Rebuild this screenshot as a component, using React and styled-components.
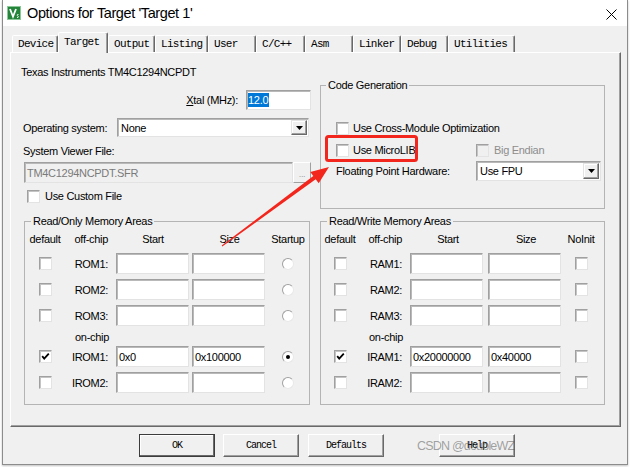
import React from "react";
import styled, { createGlobalStyle } from "styled-components";

const GlobalStyle = createGlobalStyle`
	* { box-sizing: border-box; }
	html, body { margin: 0; padding: 0; background: #fff; }
	body {
		width: 630px;
		height: 467px;
		overflow: hidden;
		font-family: "Liberation Sans", Arial, sans-serif;
		font-size: 11px;
		letter-spacing: -0.3px;
		color: #000;
	}
`;

const Stage = styled.div`
	position: relative;
	width: 630px;
	height: 467px;
	padding-left: 2px;
`;

const Window = styled.div`
	width: 626px;
	height: 465px;
	display: flex;
	flex-direction: column;
	background: #f0f0f0;
	border: 1px solid #8c8c8c;
	border-top: none;
	box-shadow: 0 1px 2px rgba(0, 0, 0, 0.25);
`;

const TitleBar = styled.div`
	height: 26px;
	display: flex;
	align-items: center;
	background: #fff;
	padding-left: 4px;
`;

const Title = styled.span`
	margin-left: 6px;
	font-size: 14.5px;
	letter-spacing: -0.4px;
	color: #000;
`;

const Close = styled.span`
	margin-left: auto;
	margin-right: 10px;
	display: flex;
	margin-top: 2px;
`;

const Body = styled.div`
	flex: 1;
	padding: 6px 0 0 7px;
	display: flex;
	flex-direction: column;
`;

const TabRow = styled.div`
	display: flex;
	align-items: flex-end;
	height: 20px;
	margin-left: 2px;
`;

const Tab = styled.div`
	position: relative;
	z-index: ${({ $active }) => ($active ? 2 : 1)};
	width: ${({ $w }) => $w}px;
	height: ${({ $active }) => ($active ? 21 : 17)}px;
	margin-bottom: ${({ $active }) => ($active ? -1 : 0)}px;
	padding: 0 0 ${({ $active }) => ($active ? 3 : 0)}px 5px;
	display: flex;
	align-items: center;
	background: #f0f0f0;
	border: 1px solid;
	border-bottom: none;
	border-color: #fff #696969 transparent #fff;
	border-radius: 2px 2px 0 0;
	box-shadow: inset -1px 0 0 #a0a0a0;
	font-family: "Liberation Mono", "Courier New", monospace;
	font-size: 11px;
	letter-spacing: -0.7px;
	white-space: nowrap;
`;

const Panel = styled.div`
	width: 611px;
	height: 375px;
	display: grid;
	grid-template-columns: 290px 285px;
	column-gap: 9px;
	align-items: start;
	padding: 12px 0 0 10px;
	border: 1px solid;
	border-color: #fff #696969 #696969 #fff;
	box-shadow: inset -1px -1px 0 #a0a0a0;
`;

const Column = styled.div`
	display: flex;
	flex-direction: column;
`;

const Line = styled.div`
	height: ${({ $h }) => $h || 14}px;
	margin-top: ${({ $mt }) => $mt || 0}px;
	padding-left: ${({ $pl }) => $pl || 0}px;
	display: flex;
	align-items: center;
	justify-content: ${({ $end }) => ($end ? "flex-end" : "flex-start")};
	gap: ${({ $gap }) => $gap || 0}px;
	color: ${({ $dim }) => ($dim ? "#8d8d8d" : "inherit")};
	white-space: nowrap;
`;

const Field = styled.div`
	position: relative;
	flex: ${({ $w }) => ($w ? "none" : "1")};
	width: ${({ $w }) => ($w ? `${$w}px` : "auto")};
	height: ${({ $h }) => $h || 21}px;
	display: flex;
	align-items: center;
	padding-left: ${({ $pl }) => $pl ?? 2}px;
	background: ${({ $disabled }) => ($disabled ? "#f0f0f0" : "#fff")};
	color: ${({ $disabled }) => ($disabled ? "#7a7a7a" : "#000")};
	border: 1px solid;
	border-color: #a0a0a0 #e3e3e3 #e3e3e3 #a0a0a0;
	box-shadow: inset 1px 1px 0 #b9b9b9;
	white-space: nowrap;
	overflow: hidden;
`;

const Selected = styled.span`
	background: #0078d7;
	color: #fff;
	line-height: 14px;
	padding-right: 1px;
`;

const DropButton = styled.span`
	position: absolute;
	top: 1px;
	right: 1px;
	bottom: 1px;
	width: 16px;
	display: flex;
	align-items: center;
	justify-content: center;
	background: #f0f0f0;
	border: 1px solid;
	border-color: #e3e3e3 #696969 #696969 #e3e3e3;
	box-shadow: inset -1px -1px 0 #a0a0a0, inset 1px 1px 0 #fff;
`;

const BrowseButton = styled.div`
	width: 18px;
	height: 21px;
	display: flex;
	align-items: flex-end;
	justify-content: center;
	padding-bottom: 3px;
	color: #a0a0a0;
	font-size: 9px;
	background: #f0f0f0;
	border: 1px solid;
	border-color: #fff #a0a0a0 #a0a0a0 #fff;
`;

const Box = styled.span`
	flex: none;
	width: 13px;
	height: 13px;
	display: inline-flex;
	align-items: center;
	justify-content: center;
	background: ${({ $disabled }) => ($disabled ? "#f0f0f0" : "#fff")};
	border: 1px solid;
	border-color: #a0a0a0 #e3e3e3 #e3e3e3 #a0a0a0;
	box-shadow: inset 1px 1px 0 #c4c4c4;
`;

const Radio = styled.span`
	width: 12px;
	height: 12px;
	display: inline-flex;
	align-items: center;
	justify-content: center;
	border-radius: 50%;
	background: #fff;
	border: 1px solid;
	border-color: #a0a0a0 #e8e8e8 #e8e8e8 #a0a0a0;

	&::after {
		content: "";
		width: 4px;
		height: 4px;
		border-radius: 50%;
		background: ${({ $on }) => ($on ? "#000" : "transparent")};
	}
`;

const Group = styled.fieldset`
	margin: ${({ $mt }) => $mt || 0}px 0 0 ${({ $ml }) => $ml || 0}px;
	width: ${({ $w }) => $w}px;
	min-width: 0;
	padding: 0 4px ${({ $pb }) => $pb}px ${({ $pl }) => $pl || 0}px;
	border: 1px solid #b4b4b4;
`;

const Legend = styled.legend`
	margin-left: ${({ $ml }) => $ml ?? 6}px;
	padding: 0 2px;
	line-height: 14px;
	font-size: 11px;
`;

const MemRow = styled.div`
	display: grid;
	grid-template-columns: ${({ $cols }) => $cols};
	height: ${({ $h }) => $h}px;
	margin-top: ${({ $mt }) => $mt}px;
	align-items: center;
`;

const Cell = styled.div`
	display: flex;
	align-items: center;
	justify-content: ${({ $align }) =>
		$align === "end" ? "flex-end" : $align === "start" ? "flex-start" : "center"};
	padding-left: ${({ $pl }) => $pl || 0}px;
	padding-right: ${({ $pr }) => $pr || 0}px;
	height: 100%;
	white-space: nowrap;
`;

const OptionGrid = styled.div`
	display: grid;
	grid-template-columns: 140px 1fr;
	align-items: center;
	height: ${({ $h }) => $h}px;
	margin-top: ${({ $mt }) => $mt}px;
`;

const ButtonRow = styled.div`
	display: flex;
	margin-top: 7px;
	padding-left: 129px;
`;

const Button = styled.div`
	width: 76px;
	height: 23px;
	margin-left: ${({ $ml }) => $ml || 0}px;
	display: flex;
	align-items: center;
	justify-content: center;
	background: #f0f0f0;
	border: 1px solid;
	border-color: ${({ $default }) =>
		$default ? "#3c3c3c" : "#fff #696969 #696969 #fff"};
	box-shadow: ${({ $default }) =>
		$default
			? "inset -1px -1px 0 #696969, inset 1px 1px 0 #fff"
			: "inset -1px -1px 0 #a0a0a0"};
	font-family: "Liberation Mono", "Courier New", monospace;
	font-size: 10px;
	letter-spacing: -1px;
`;

const Overlay = styled.svg`
	position: absolute;
	left: 0;
	top: 0;
	pointer-events: none;
`;

const Watermark = styled.span`
	position: absolute;
	left: 417px;
	top: 439px;
	font-size: 12.5px;
	letter-spacing: -0.8px;
	color: rgba(90, 90, 90, 0.55);
	pointer-events: none;
`;

const Check = ({ on, disabled }) => (
	<Box $disabled={disabled}>
		{on && (
			<svg width="9" height="9" viewBox="0 0 9 9">
				<polyline points="1.2,4.2 3.2,6.6 7.8,1.6" fill="none" stroke="#000" strokeWidth="1.8" />
			</svg>
		)}
	</Box>
);

const Select = ({ value, w, h }) => (
	<Field $w={w} $h={h} $pl={3}>
		{value}
		<DropButton>
			<svg width="7" height="4" viewBox="0 0 7 4">
				<polygon points="0,0 7,0 3.5,4" fill="#000" />
			</svg>
		</DropButton>
	</Field>
);

const tabs = [
	["Device", 46],
	["Target", 50],
	["Output", 47],
	["Listing", 53],
	["User", 48],
	["C/C++", 49],
	["Asm", 48],
	["Linker", 48],
	["Debug", 47],
	["Utilities", 67],
];

const romRows = [
	{ label: "ROM1:" },
	{ label: "ROM2:" },
	{ label: "ROM3:" },
	{ label: "IROM1:", def: true, start: "0x0", size: "0x100000", last: true, chip: true },
	{ label: "IROM2:", chip: true },
];

const ramRows = [
	{ label: "RAM1:" },
	{ label: "RAM2:" },
	{ label: "RAM3:" },
	{ label: "IRAM1:", def: true, start: "0x20000000", size: "0x40000", chip: true },
	{ label: "IRAM2:", chip: true },
];

const MemoryArea = ({ title, cols, lastLabel, rows, radio, w, mt, ml }) => {
	const rowMt = (row, i) => {
		if (i === 0) return 7;
		if (row.chip && !rows[i - 1].chip) return 2;
		return 5;
	};
	return (
		<Group $w={w} $pb={11} $mt={mt} $ml={ml}>
			<Legend>{title}</Legend>
			<MemRow $cols={cols} $h={14} $mt={4}>
				<Cell>default</Cell>
				<Cell $align="end" $pr={2}>off-chip</Cell>
				<Cell $pl={6}>Start</Cell>
				<Cell $pl={2}>Size</Cell>
				<Cell>{lastLabel}</Cell>
			</MemRow>
			{rows.map((row, i) => (
				<React.Fragment key={row.label}>
					{row.chip && !rows[i - 1].chip && (
						<MemRow $cols={cols} $h={14} $mt={4}>
							<Cell />
							<Cell $align="end" $pr={1}>on-chip</Cell>
						</MemRow>
					)}
					<MemRow $cols={cols} $h={21} $mt={rowMt(row, i)}>
						<Cell>
							<Check on={row.def} />
						</Cell>
						<Cell $align="end" $pr={2}>{row.label}</Cell>
						<Cell $align="start" $pl={6}>
							<Field $w={73}>{row.start}</Field>
						</Cell>
						<Cell $align="start" $pl={2}>
							<Field $w={73}>{row.size}</Field>
						</Cell>
						<Cell>{radio ? <Radio $on={row.last} /> : <Check />}</Cell>
					</MemRow>
				</React.Fragment>
			))}
		</Group>
	);
};

const App = () => {
	return (
		<Stage>
			<GlobalStyle />
			<Window>
				<TitleBar>
					<svg width="14" height="14" viewBox="0 0 14 14">
						<rect x="0.5" y="0.5" width="13" height="13" fill="#23843a" stroke="#8cc79a" />
						<path d="M3 3 L6 10.5 L9 3" fill="none" stroke="#fff" strokeWidth="1.8" />
						<path d="M11.5 8.5 C10 8 9.5 9.5 10.8 10 C12 10.5 11.5 12 10 11.5" fill="none" stroke="#fff" strokeWidth="0.9" />
					</svg>
					<Title>Options for Target 'Target 1'</Title>
					<Close>
						<svg width="11" height="11" viewBox="0 0 11 11">
							<path d="M0.5 0.5 L10.5 10.5 M10.5 0.5 L0.5 10.5" stroke="#000" strokeWidth="1" />
						</svg>
					</Close>
				</TitleBar>
				<Body>
					<TabRow>
						{tabs.map(([name, w]) => (
							<Tab key={name} $w={w} $active={name === "Target"}>
								{name}
							</Tab>
						))}
					</TabRow>
					<Panel>
						<Column>
							<Line>Texas Instruments TM4C1294NCPDT</Line>
							<Line $mt={11} $h={20} $end $gap={8}>
								<span>
									<u>X</u>tal (MHz):
								</span>
								<Field $w={65} $h={20} $pl={1}>
									<Selected>12.0</Selected>
								</Field>
							</Line>
							<Line $mt={8} $h={19} $pl={2}>
								<span style={{ width: 94 }}>Operating system:</span>
								<Select value="None" w={192} h={19} />
							</Line>
							<Line $mt={7} $pl={2}>System Viewer File:</Line>
							<Line $mt={4} $h={21} $pl={3}>
								<Field $disabled>TM4C1294NCPDT.SFR</Field>
								<BrowseButton>...</BrowseButton>
							</Line>
							<Line $mt={6} $pl={6} $gap={5}>
								<Check />
								Use Custom File
							</Line>
							<MemoryArea
								title="Read/Only Memory Areas"
								cols="40px 45px 80px 77px 42px"
								lastLabel="Startup"
								rows={romRows}
								radio
								w={286}
								mt={11}
								ml={3}
							/>
						</Column>
						<Column>
							<Group $w={285} $mt={13} $pb={27} $pl={15}>
								<Legend $ml={-10}>Code Generation</Legend>
								<Line $mt={29} $gap={4}>
									<Check />
									Use Cross-Module Optimization
								</Line>
								<OptionGrid $mt={8} $h={14}>
									<Line $gap={4}>
										<Check />
										Use MicroLIB
									</Line>
									<Line $gap={5} $dim>
										<Check disabled />
										Big Endian
									</Line>
								</OptionGrid>
								<OptionGrid $mt={4} $h={20}>
									<span>Floating Point Hardware:</span>
									<Select value="Use FPU" w={125} h={20} />
								</OptionGrid>
							</Group>
							<MemoryArea
								title="Read/Write Memory Areas"
								cols="38px 45px 82px 78px 34px"
								lastLabel="NoInit"
								rows={ramRows}
								w={285}
								mt={5}
							/>
						</Column>
					</Panel>
					<ButtonRow>
						<Button $default>OK</Button>
						<Button $ml={8}>Cancel</Button>
						<Button $ml={9}>Defaults</Button>
						<Button $ml={55}>Help</Button>
					</ButtonRow>
				</Body>
			</Window>
			<Overlay width="630" height="467" viewBox="0 0 630 467">
				<rect x="326.5" y="136.5" width="90" height="24" rx="2" fill="none" stroke="#f3261d" strokeWidth="3" />
				<polygon
					points="221.7,245.6 313.3,176.1 310.3,172.1 329,167 318.7,183.3 315.7,179.3 222.3,246.4"
					fill="#f3261d"
				/>
			</Overlay>
			<Watermark>CSDN @doubleWZ</Watermark>
		</Stage>
	);
};

export default App;
